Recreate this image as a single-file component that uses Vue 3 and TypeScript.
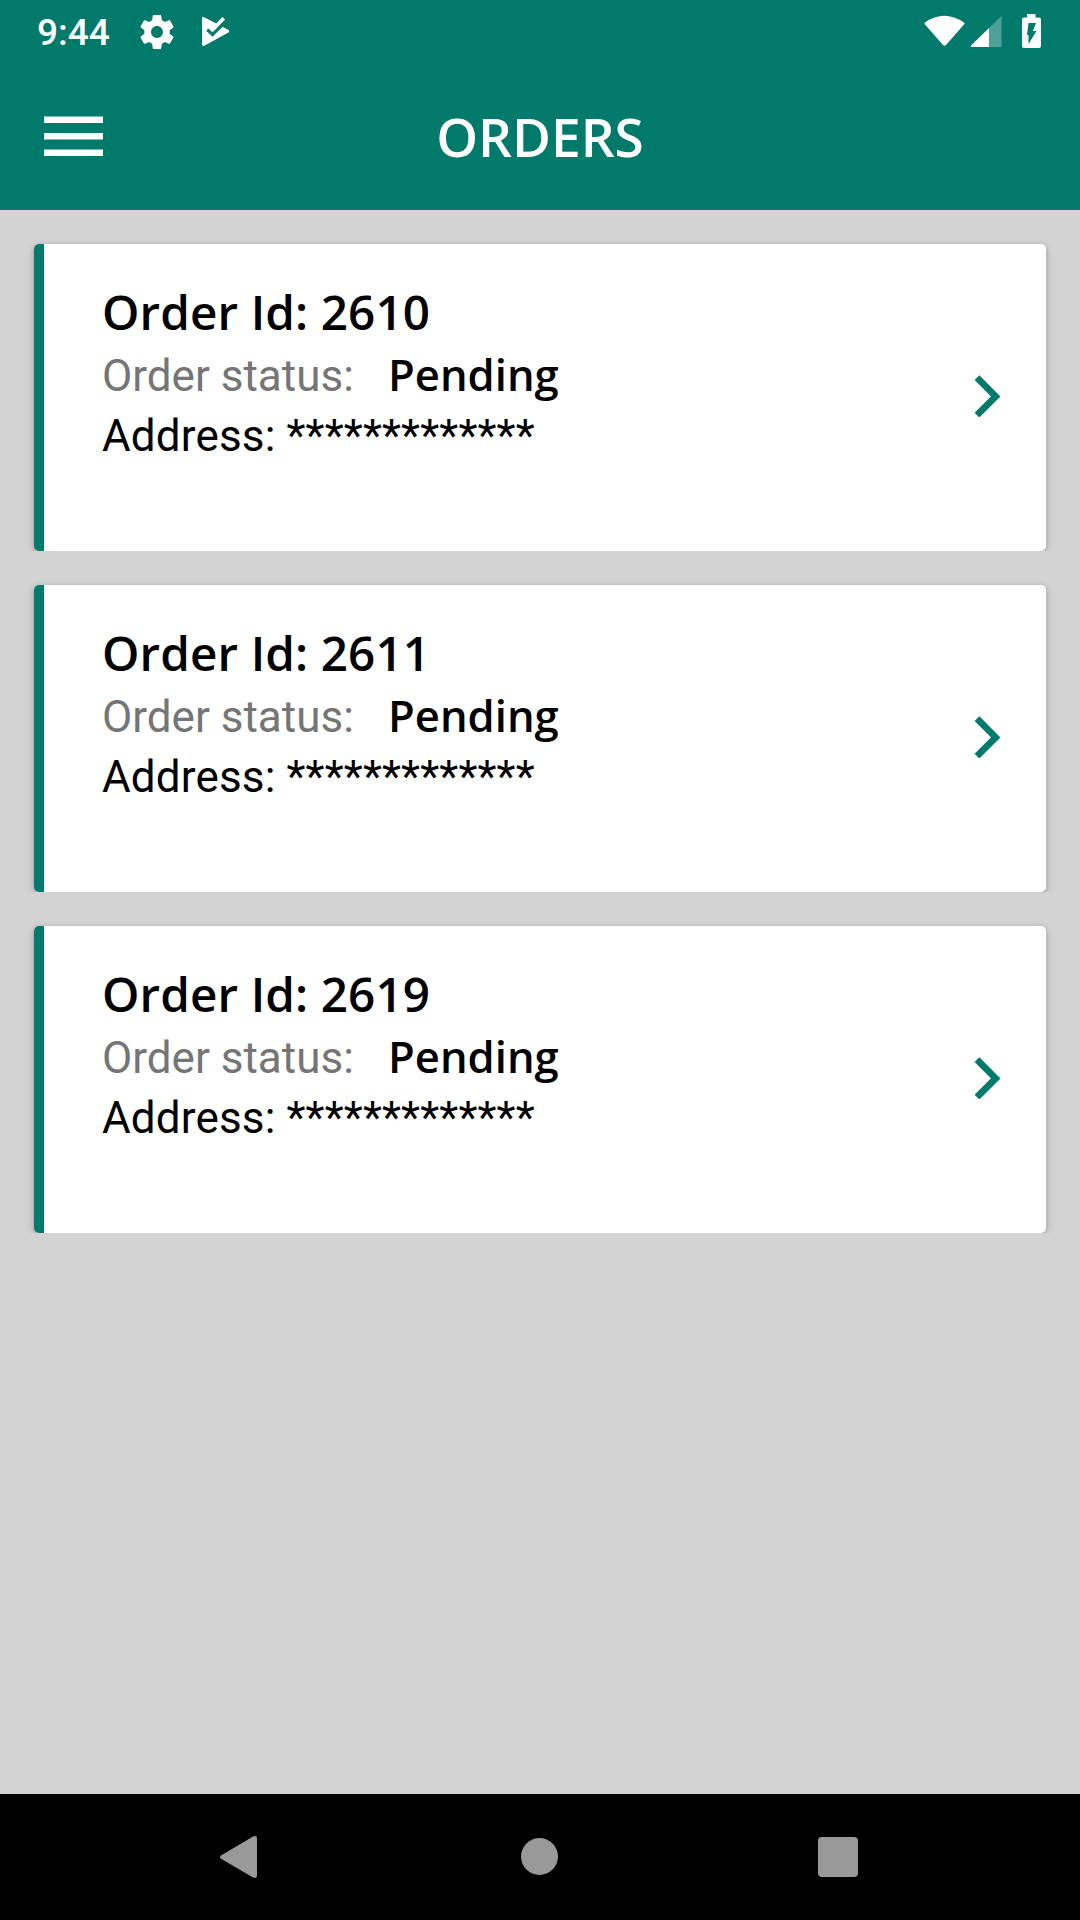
<script setup lang="ts">
interface Order {
  id: number
  status: string
  address: string
}

const orders: Order[] = [
  { id: 2610, status: 'Pending', address: '*************' },
  { id: 2611, status: 'Pending', address: '*************' },
  { id: 2619, status: 'Pending', address: '*************' },
]
</script>

<template>
  <div class="screen">
    <div class="status-bar">
      <span class="clock">9:44</span>
      <svg class="gear" width="34" height="34" viewBox="2 2 20 20" fill="#fff">
        <path d="M19.43 12.98c.04-.32.07-.64.07-.98s-.03-.66-.07-.98l2.11-1.65c.19-.15.24-.42.12-.64l-2-3.46c-.12-.22-.39-.3-.61-.22l-2.49 1c-.52-.4-1.08-.73-1.69-.98l-.38-2.65C14.46 2.18 14.25 2 14 2h-4c-.25 0-.46.18-.49.42l-.38 2.65c-.61.25-1.17.59-1.69.98l-2.49-1c-.23-.09-.49 0-.61.22l-2 3.46c-.13.22-.07.49.12.64l2.11 1.65c-.04.32-.07.65-.07.98s.03.66.07.98l-2.11 1.65c-.19.15-.24.42-.12.64l2 3.46c.12.22.39.3.61.22l2.49-1c.52.4 1.08.73 1.69.98l.38 2.65c.03.24.24.42.49.42h4c.25 0 .46-.18.49-.42l.38-2.65c.61-.25 1.17-.59 1.69-.98l2.49 1c.23.09.49 0 .61-.22l2-3.46c.12-.22.07-.49-.12-.64l-2.11-1.65zM12 15.5c-1.93 0-3.5-1.57-3.5-3.5s1.57-3.5 3.5-3.5 3.5 1.57 3.5 3.5-1.57 3.5-3.5 3.5z" />
      </svg>
      <svg class="play" width="30" height="32" viewBox="0 0 30 32">
        <path d="M2 3.500 Q2 1 4.300 2.200 L28.500 15 Q30 16.300 28.500 17.600 L4.300 30.800 Q2 31.500 2 29Z" fill="#fff" />
        <path d="M7.300 14.600 L12.500 19.500 L26.500 5.500" fill="none" stroke="#01796b" stroke-width="3.200" />
        <path d="M12.500 14.800 L23.800 3.200" fill="none" stroke="#fff" stroke-width="3.600" />
      </svg>
      <svg class="system" width="120" height="36" viewBox="0 0 120 36">
        <path d="M1 8.500 Q20 -5 40 8.500 Q41 9.500 40 10.500 L22 31 Q20.500 32.500 19 31 L1 10.500 Q0 9.500 1 8.500Z" fill="#fff" />
        <path d="M65 14 L77.500 2 V33 H65Z" fill="#4fa197" />
        <path d="M65 14 V33 H47 V31.500Z" fill="#fff" />
        <path d="M103 0 H111.500 V3.500 H115 Q117 3.500 117 5.500 V32 Q117 34 115 34 H100 Q98 34 98 32 V5.500 Q98 3.500 100 3.500 H103Z" fill="#fff" />
        <path d="M104.500 9 H112 L109 17 H112.500 L104.500 30 V21 H103Z" fill="#01796b" />
      </svg>
    </div>
    <header class="app-bar">
      <svg class="menu" width="60" height="40" viewBox="0 0 60 40" fill="#fff">
        <path d="M0 .500H59V7H0ZM0 17H59V23.500H0ZM0 33.500H59V40H0Z" />
      </svg>
      <h1 class="title">ORDERS</h1>
    </header>
    <main class="list">
      <div v-for="order in orders" :key="order.id" class="slot">
        <article class="card">
          <div class="accent"></div>
          <div class="details">
            <div class="order-id">Order Id: {{ order.id }}</div>
            <div class="row">
              <span class="label">Order status:</span>
              <span class="state">{{ order.status }}</span>
            </div>
            <div class="address">Address: {{ order.address }}</div>
          </div>
          <svg class="chevron" width="27" height="42" viewBox="0 0 27 42">
            <path d="M3 2.700 L21.700 21.400 L3 40.100" fill="none" stroke="#01796b" stroke-width="6.700" />
          </svg>
        </article>
      </div>
    </main>
    <nav class="nav-bar">
      <svg width="38" height="42" viewBox="0 0 38 42">
        <path d="M1 19.500 L33 .500 Q37 -1 37 2.500 V39.500 Q37 43 33 41.500 L1 22.800 Q-1 21 1 19.500Z" fill="#999" />
      </svg>
      <div class="home"></div>
      <div class="recent"></div>
    </nav>
  </div>
</template>

<style>
body {
  margin: 0;
}
</style>

<style scoped>
.screen {
  width: 1080px;
  height: 1920px;
  display: flex;
  flex-direction: column;
  overflow: hidden;
  background: #d3d3d3;
  color: #000;
}
.status-bar {
  height: 63px;
  display: flex;
  align-items: flex-start;
  box-sizing: border-box;
  padding: 14px 36px 0 37px;
  background: #01796b;
}
.clock {
  width: 102px;
  height: 40px;
  margin-top: -1px;
  color: #fff;
  font: 500 37px/40px Roboto, sans-serif;
}
.gear {
  margin: 1px 0 0 1px;
}
.play {
  margin: 1px 0 0 26px;
}
.system {
  margin-left: auto;
}
.app-bar {
  height: 147px;
  display: grid;
  grid-template-columns: 200px 1fr 200px;
  align-items: center;
  background: #01796b;
}
.menu {
  margin: 0 0 1px 44px;
}
.title {
  margin: 0;
  color: #fff;
  text-align: center;
  font: 600 53.2px/72px "Open Sans", sans-serif;
}
.list {
  flex: 1;
  padding-top: 26px;
}
.slot {
  height: 315px;
  margin-bottom: 26px;
  padding: 8px 34px 0;
  box-sizing: border-box;
  overflow: hidden;
}
.card {
  height: 307px;
  display: flex;
  align-items: flex-start;
  overflow: hidden;
  border-radius: 5px;
  background: #fff;
  box-shadow: 0 2px 6px rgba(0, 0, 0, 0.3);
}
.accent {
  width: 10px;
  height: 100%;
  background: #01796b;
}
.details {
  flex: 1;
  padding: 36px 0 0 58px;
}
.order-id {
  font: 600 47.6px/63px "Open Sans", sans-serif;
  letter-spacing: 0.12px;
}
.row {
  height: 62px;
  display: flex;
  align-items: baseline;
}
.label {
  width: 286px;
  color: #757575;
  font: 400 44px/62px Roboto, sans-serif;
}
.state {
  font: 600 43.6px/62px "Open Sans", sans-serif;
}
.address {
  font: 400 44px/62px Roboto, sans-serif;
  letter-spacing: 0.15px;
}
.chevron {
  margin: 131px 45px 0 0;
}
.nav-bar {
  height: 126px;
  display: flex;
  align-items: center;
  justify-content: space-between;
  box-sizing: border-box;
  padding: 0 222px 0 220px;
  background: #000;
}
.home {
  width: 37px;
  height: 37px;
  margin: 0 0 1px 3px;
  border-radius: 50%;
  background: #999;
}
.recent {
  width: 40px;
  height: 40px;
  border-radius: 4px;
  background: #999;
}
</style>
